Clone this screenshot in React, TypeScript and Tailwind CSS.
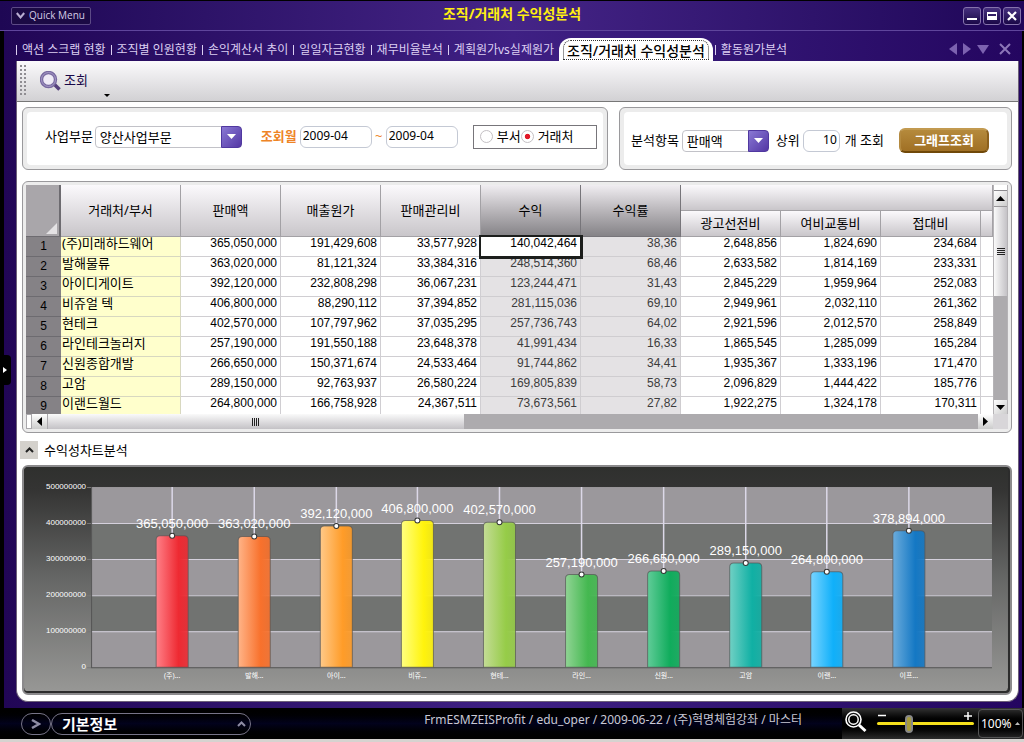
import { useState } from "react";

const tabs = [
  "액션 스크랩 현황",
  "조직별 인원현황",
  "손익계산서 추이",
  "일일자금현황",
  "재무비율분석",
  "계획원가vs실제원가",
];

const columns = ["판매액", "매출원가", "판매관리비", "수익", "수익률"];
const subColumns = ["광고선전비", "여비교통비", "접대비"];

const rows = [
  ["(주)미래하드웨어", "365,050,000", "191,429,608", "33,577,928", "140,042,464", "38,36", "2,648,856", "1,824,690", "234,684"],
  ["발해물류", "363,020,000", "81,121,324", "33,384,316", "248,514,360", "68,46", "2,633,582", "1,814,169", "233,331"],
  ["아이디게이트", "392,120,000", "232,808,298", "36,067,231", "123,244,471", "31,43", "2,845,229", "1,959,964", "252,083"],
  ["비쥬얼 텍", "406,800,000", "88,290,112", "37,394,852", "281,115,036", "69,10", "2,949,961", "2,032,110", "261,362"],
  ["현테크", "402,570,000", "107,797,962", "37,035,295", "257,736,743", "64,02", "2,921,596", "2,012,570", "258,849"],
  ["라인테크놀러지", "257,190,000", "191,550,188", "23,648,378", "41,991,434", "16,33", "1,865,545", "1,285,099", "165,284"],
  ["신원종합개발", "266,650,000", "150,371,674", "24,533,464", "91,744,862", "34,41", "1,935,367", "1,333,196", "171,470"],
  ["고암", "289,150,000", "92,763,937", "26,580,224", "169,805,839", "58,73", "2,096,829", "1,444,422", "185,776"],
  ["이랜드월드", "264,800,000", "166,758,928", "24,367,511", "73,673,561", "27,82", "1,922,275", "1,324,178", "170,311"],
];

const bars = [
  { label: "(주)...", value: 365050000, light: "#ff8088", color: "#ee2a32" },
  { label: "발해...", value: 363020000, light: "#ffb488", color: "#f8712c" },
  { label: "아이...", value: 392120000, light: "#ffc988", color: "#ff9c28" },
  { label: "비쥬...", value: 406800000, light: "#ffff80", color: "#fff30c" },
  { label: "현테...", value: 402570000, light: "#c4dc96", color: "#96cc48" },
  { label: "라인...", value: 257190000, light: "#90d494", color: "#44b850" },
  { label: "신원...", value: 266650000, light: "#60cc98", color: "#10ac5c" },
  { label: "고암", value: 289150000, light: "#70d0c4", color: "#10b0a4" },
  { label: "이랜...", value: 264800000, light: "#78d4ff", color: "#10b0fa" },
  { label: "이프...", value: 378894000, light: "#6cacdc", color: "#1478c4" },
];

const panel = "rounded-md border border-[#9a999c] bg-[#ececec]";
const headCell =
  "border-r border-b border-[#a3a1a5] bg-linear-to-b from-[#fbf9fc] to-[#c9c6ca] p-0 text-[13px] font-normal";
const darkHead =
  "border-r border-b border-[#77757a] bg-linear-to-b from-[#f0edf1] via-[#b9b6ba] to-[#858387] p-0 text-[13px] font-normal";
const numberFont = "font-['Liberation_Sans',sans-serif]";

function SelectBox({ id, value, className }: { id: string; value: string; className: string }) {
  return (
    <div className={`relative h-[22px] ${className}`}>
      <select
        id={id}
        defaultValue={value}
        className="h-full w-full appearance-none rounded-sm border border-[#c2c2c8] bg-white pl-1 text-[13px] leading-5 text-black"
      >
        <option>{value}</option>
      </select>
      <span className="pointer-events-none absolute inset-y-0 right-0 flex w-[21px] items-center justify-center rounded-r-sm border border-[#5038a0] bg-linear-to-br from-[#8a78d4] to-[#5436a4]">
        <svg width="9" height="5" viewBox="0 0 9 5">
          <path d="M0 0h9L4.500 5z" fill="#fff" />
        </svg>
      </span>
    </div>
  );
}

function TitleBar() {
  const button =
    "flex size-[18px] items-center justify-center rounded-[3px] border border-[#8573ac] bg-linear-to-b from-[#46307e] to-[#1b0848]";
  return (
    <header className="grid h-[31px] grid-cols-[1fr_auto_1fr] items-center border-t border-b border-t-black border-b-[#5f459c] bg-linear-to-r from-[#1e0754] via-[#452487] to-[#1f0658] px-[3px]">
      <button className="ml-2 flex h-[18px] w-20 items-center gap-1 rounded-xs border border-[#5c4a86] bg-[#1b0a44] pl-1 font-['Open_Sans',sans-serif] text-[10px] text-[#d4cce6]">
        <svg width="9" height="7" viewBox="0 0 9 7" fill="none" stroke="#b9aed2" strokeWidth="2">
          <path d="M.8 1l3.700 4.500L8.200 1" />
        </svg>
        Quick Menu
      </button>
      <h1 className="pb-1 text-[14px] leading-5 font-bold text-[#ffee10]">조직/거래처 수익성분석</h1>
      <div className="flex justify-end gap-0.5">
        <button aria-label="최소화" className={button}>
          <svg width="10" height="10" viewBox="0 0 10 10"><path d="M0 7h10v2H0z" fill="#fff" /></svg>
        </button>
        <button aria-label="최대화" className={button}>
          <svg width="10" height="8" viewBox="0 0 10 8"><path d="M0 0h10v8H0zM1 2v2h8V2z" fill="#fff" fillRule="evenodd" /></svg>
        </button>
        <button aria-label="닫기" className={button}>
          <svg width="10" height="10" viewBox="0 0 10 10" stroke="#fff" strokeWidth="2.200"><path d="M1 1l8 8M9 1L1 9" /></svg>
        </button>
      </div>
    </header>
  );
}

function TabBar() {
  return (
    <nav className="flex h-[30px] items-end justify-between pr-2 text-[12px] text-[#dccff2]">
      <div className="flex items-end">
        <ul className="flex pb-[3px] leading-4">
          {tabs.map((tab) => (
            <li key={tab} className="flex items-center whitespace-nowrap">
              <span className="mr-[5px] h-2.5 w-px bg-[#dccff2]" />
              <a href="#" className="mr-[5px]">{tab}</a>
            </li>
          ))}
        </ul>
        <a
          href="#"
          aria-current="page"
          className="flex h-[23px] rounded-t-xl bg-white px-1 pt-0.5 text-[14px] leading-5 font-medium whitespace-nowrap text-black"
        >
          <span className="h-5 rounded-t-lg border border-dotted border-[#333] px-[3px]">조직/거래처 수익성분석</span>
        </a>
        <div className="flex items-center pb-[3px] pl-0.5 leading-4">
          <span className="mr-[5px] h-2.5 w-px bg-[#dccff2]" />
          <a href="#">활동원가분석</a>
        </div>
      </div>
      <div className="flex gap-1.5 pb-1.5">
        <button aria-label="이전 탭"><svg width="8" height="12" viewBox="0 0 8 12"><path d="M8 0v12L0 6z" fill="#7c62b0" /></svg></button>
        <button aria-label="다음 탭"><svg width="8" height="12" viewBox="0 0 8 12"><path d="M0 0v12l8-6z" fill="#7c62b0" /></svg></button>
        <button aria-label="탭 목록"><svg width="12" height="12" viewBox="0 0 12 12"><path d="M0 2h12L6 11z" fill="#7c62b0" /></svg></button>
        <button aria-label="탭 닫기" className="ml-1"><svg width="12" height="12" viewBox="0 0 12 12" stroke="#8c76b8" strokeWidth="2"><path d="M1 1l10 10M11 1L1 11" /></svg></button>
      </div>
    </nav>
  );
}

function Toolbar() {
  return (
    <div className="flex h-[41px] items-center border-b border-[#777] bg-linear-to-b from-[#fbfafc] to-[#d2d1d4] pl-[3px]">
      <svg width="6" height="32" viewBox="0 0 6 32" fill="#8f8d92">
        {[0, 4, 8, 12, 16, 20, 24, 28].map((y) => (
          <path key={y} d={`M0 ${y}h2v2H0zM4 ${y}h2v2H4z`} />
        ))}
      </svg>
      <button className="ml-3.5 flex items-center gap-[3px] text-[13px] text-[#180848]">
        <svg width="21" height="20" viewBox="0 0 21 20" fill="none">
          <path d="M14 13l5.500 5.500" stroke="#55407c" strokeWidth="3.500" />
          <circle cx="8.500" cy="8.500" r="7" fill="#eeeaf6" stroke="#7869a0" strokeWidth="3.400" />
          <circle cx="8.500" cy="8.500" r="7" stroke="#a79bc8" />
        </svg>
        조회
      </button>
      <button aria-label="도구 메뉴" className="mt-7 ml-4">
        <svg width="6" height="3" viewBox="0 0 6 3"><path d="M0 0h6L3 3z" /></svg>
      </button>
    </div>
  );
}

function Filters() {
  const [target, setTarget] = useState("거래처");
  const input = "h-[22px] rounded-md border border-[#c4c9d4] bg-white pb-0.5 pl-0.5 text-[12px] leading-4";
  const box = "flex h-[53px] rounded-sm bg-white text-[13px]";

  return (
    <form className="grid grid-cols-[586fr_393fr] gap-[11px]" onSubmit={(e) => e.preventDefault()}>
      <div className={`${panel} p-1`}>
        <div className={`${box} items-center pb-1 pl-[18px]`}>
          <label htmlFor="division">사업부문</label>
          <SelectBox id="division" value="양산사업부문" className="ml-0.5 w-[147px]" />
          <label htmlFor="from" className="ml-[19px] font-bold text-[#ee8426]">조회월</label>
          <input id="from" defaultValue="2009-04" className={`ml-[3px] w-[72px] ${input}`} />
          <span className="w-3.5 text-center text-[#ee8426]">~</span>
          <input aria-label="종료월" defaultValue="2009-04" className={`w-[72px] ${input}`} />
          <fieldset aria-label="조회 대상" className="ml-[15px] flex h-6 w-[124px] items-center border border-[#77757a] pl-1.5">
            {["부서", "거래처"].map((name) => (
              <label key={name} className="flex items-center gap-1">
                <input
                  type="radio"
                  name="target"
                  checked={target === name}
                  onChange={() => setTarget(name)}
                  className="size-[13px] appearance-none rounded-full border border-[#c4c0c4] bg-white checked:bg-radial checked:from-[#e01828] checked:from-30% checked:to-white checked:to-40%"
                />
                {name}
              </label>
            ))}
          </fieldset>
        </div>
      </div>
      <div className={`${panel} p-1`}>
        <div className={`${box} items-center pt-1 pl-[7px]`}>
          <label htmlFor="item">분석항목</label>
          <SelectBox id="item" value="판매액" className="ml-[3px] w-[87px]" />
          <label htmlFor="top" className="ml-[7px]">상위</label>
          <input id="top" defaultValue="10" className={`ml-[3px] w-[37px] pr-0.5 text-right ${input}`} />
          <span className="ml-[5px]">개 조회</span>
          <button className="ml-[15px] h-[25px] w-[90px] rounded-md border-2 border-t-[#c29a50] border-r-[#8c601c] border-b-[#704808] border-l-[#b48a40] bg-linear-to-b from-[#b58a3c] to-[#a07024] pb-0.5 leading-4 font-bold text-white">
            그래프조회
          </button>
        </div>
      </div>
    </form>
  );
}

function Grid() {
  return (
    <div className={`${panel} grid grid-cols-[1fr_15px] p-[3px]`}>
      <div className="h-[229px] overflow-hidden bg-white">
        <table className="w-full table-fixed border-separate border-spacing-0">
          <colgroup>
            <col className="w-[35px]" />
            <col className="w-[120px]" />
            {[...columns, ...subColumns].map((c) => (
              <col key={c} className="w-[100px]" />
            ))}
            <col />
          </colgroup>
          <thead>
            <tr className="h-[26px]">
              <th rowSpan={2} className="border-r-2 border-b border-[#6d6b70] bg-[#a9a6aa] p-0 pr-0.5 pb-0.5 align-bottom">
                <svg className="ml-auto" width="11" height="11" viewBox="0 0 11 11"><path d="M11 0v11H0z" fill="#e4e2e4" /></svg>
              </th>
              <th rowSpan={2} className={headCell}>거래처/부서</th>
              {columns.map((c) => (
                <th key={c} rowSpan={2} className={c.startsWith("수익") ? darkHead : headCell}>{c}</th>
              ))}
              <th colSpan={4} className={headCell} />
            </tr>
            <tr className="h-[26px]">
              {subColumns.map((c) => (
                <th key={c} className={headCell}>{c}</th>
              ))}
              <th className={headCell} />
            </tr>
          </thead>
          <tbody>
            {rows.map((row, r) => (
              <tr key={row[0]} className="h-5">
                <th className={`border-b border-[#6d6b70] bg-[#858286] p-0 text-[12px] leading-[19px] font-normal ${numberFont}`}>{r + 1}</th>
                <td className="border-r border-b border-[#d8d8c0] bg-[#ffffcc] p-0 pl-px align-top text-[13px] leading-[13px] whitespace-nowrap">{row[0]}</td>
                {row.slice(1).map((cell, c) => {
                  const active = r === 0 && c === 3;
                  const shaded = c === 3 || c === 4;
                  return (
                    <td
                      key={c}
                      className={`border-r border-b p-0 pr-[3px] text-right align-top text-[12px] leading-[13px] ${numberFont} ${
                        active
                          ? "relative border-[#1c1e1c] bg-white outline-2 outline-[#1c1e1c]"
                          : shaded
                            ? "border-[#cfcdd0] bg-[#e4e2e4] text-[#3c3c3c]"
                            : "border-[#d0ced2]"
                      }`}
                    >
                      {cell}
                    </td>
                  );
                })}
                <td className="border-b border-[#d0ced2] p-0" />
              </tr>
            ))}
          </tbody>
        </table>
      </div>

      {/* vertical scroll bar */}
      <div className="flex h-[229px] flex-col border-x border-[#b5b3b6] bg-[#adabae]">
        <div className="h-1.5 border-b border-[#8c8a8e] bg-white" />
        <button aria-label="위로" className="flex h-4 items-center justify-center border-b border-[#99979a] bg-linear-to-br from-white to-[#ccc]">
          <svg width="9" height="5" viewBox="0 0 9 5"><path d="M0 5h9L4.500 0z" /></svg>
        </button>
        <div className="flex h-[89px] items-center justify-center bg-linear-to-r from-[#fafafa] to-[#c4c2c6]">
          <svg width="8" height="8" viewBox="0 0 8 8"><path d="M0 .5h8M0 2.500h8M0 4.500h8M0 6.500h8" stroke="#222" /></svg>
        </div>
        <button aria-label="아래로" className="mt-auto flex h-3.5 items-center justify-center bg-linear-to-br from-white to-[#ccc]">
          <svg width="9" height="5" viewBox="0 0 9 5"><path d="M0 0h9L4.500 5z" /></svg>
        </button>
      </div>

      {/* horizontal scroll bar */}
      <div className="flex h-[15px] bg-[#adabae]">
        <div className="w-1.5 border border-[#aaa8ac] bg-white" />
        <button aria-label="왼쪽으로" className="flex w-4 items-center justify-center border-r border-[#aaa8ac] bg-linear-to-b from-white to-[#ccc]">
          <svg width="5" height="9" viewBox="0 0 5 9"><path d="M5 0v9L0 4.500z" /></svg>
        </button>
        <div className="flex w-[43%] items-center justify-center bg-linear-to-b from-[#fafafa] to-[#c4c2c6]">
          <svg width="8" height="8" viewBox="0 0 8 8"><path d="M.5 0v8M2.500 0v8M4.500 0v8M6.500 0v8" stroke="#222" /></svg>
        </div>
        <button aria-label="오른쪽으로" className="ml-auto flex w-[15px] items-center justify-center bg-linear-to-b from-white to-[#ccc]">
          <svg width="5" height="9" viewBox="0 0 5 9"><path d="M0 0v9l5-4.500z" /></svg>
        </button>
      </div>
      <div className="bg-[#d8d6d9]" />
    </div>
  );
}

const BASE = 200; // y of the zero line
const yOf = (value: number) => BASE - (value / 500000000) * 180;

function Chart() {
  return (
    <div className="overflow-hidden rounded-md border-2 border-[#8b8a8c] bg-[#2c2c2c] pr-0.5 pb-0.5">
      <svg viewBox="0 0 983 224" className="block h-auto w-full">
        <defs>
          <linearGradient id="back" x1="0" y1="0" x2="0" y2="1">
            <stop offset="0" stopColor="#2f302e" />
            <stop offset=".1" stopColor="#343433" />
            <stop offset=".5" stopColor="#666766" />
            <stop offset="1" stopColor="#979795" />
          </linearGradient>
          {bars.map((bar, i) => (
            <linearGradient key={bar.label} id={`bar${i}`}>
              <stop offset="0" stopColor={bar.light} />
              <stop offset=".7" stopColor={bar.color} />
              <stop offset="1" stopColor={bar.color} stopOpacity=".88" />
            </linearGradient>
          ))}
        </defs>
        <rect width="983" height="224" rx="4" fill="url(#back)" />
        {[0, 1, 2, 3, 4].map((i) => (
          <rect key={i} x="67" y={20 + i * 36} width="900" height="36" fill={i % 2 ? "#717371" : "#9b989c"} />
        ))}
        {[0, 1, 2, 3, 4, 5].map((i) => (
          <g key={i}>
            {i < 5 && i > 0 && <path d={`M67 ${20.5 + i * 36}h900`} stroke="#d4d0dc" />}
            <path d={`M63 ${20.5 + i * 36}h4`} stroke="#777" />
            <text x="62" y={22 + i * 36} textAnchor="end" fontSize="8" fill="#fff" className="font-['Liberation_Sans',sans-serif]">
              {(5 - i) * 100000000}
            </text>
          </g>
        ))}
        <path d={`M67.500 20V${BASE}.5H967`} fill="none" stroke="#555" />
        {bars.map((bar, i) => {
          const x = Math.round(148 + i * 81.8);
          const y = yOf(bar.value);
          return (
            <g key={bar.label}>
              <path d={`M${x} 20V${y}`} stroke="#dcd8e8" strokeWidth="1.500" />
              <path
                d={`M${x - 16} ${BASE}V${y + 4}q0-4 4-4h24q4 0 4 4V${BASE}z`}
                fill={`url(#bar${i})`}
                stroke="#555"
                strokeOpacity=".7"
              />
              <circle cx={x} cy={y} r="2.500" fill="#fff" stroke="#333" />
              <text x={x} y={y - 8} textAnchor="middle" fontSize="13" fill="#fff" className="font-['Liberation_Sans',sans-serif]">
                {bar.value.toLocaleString("en-US")}
              </text>
              <text x={x} y="211" textAnchor="middle" fontSize="7" fill="#fff">{bar.label}</text>
            </g>
          );
        })}
      </svg>
    </div>
  );
}

function StatusBar() {
  return (
    <footer className="flex h-[31px] items-stretch bg-linear-to-b from-black via-[#02021c] to-black">
      <div className="flex flex-1 items-center pl-[21px]">
        <button aria-label="열기" className="flex h-[22px] w-[30px] items-center justify-center rounded-full border border-[#777488]">
          <svg width="10" height="10" viewBox="0 0 10 10" fill="none" stroke="#8e8ca4" strokeWidth="2.500"><path d="M1 1l7 4-7 4" /></svg>
        </button>
        <button className="flex h-[22px] w-[200px] items-center justify-between rounded-full border border-[#777488] pr-1 pl-2.5 text-[15px] leading-5 font-bold text-white">
          기본정보
          <svg width="9" height="6" viewBox="0 0 9 6" fill="none" stroke="#8e8ca4" strokeWidth="2"><path d="M1 5l3.500-3.500L8 5" /></svg>
        </button>
        <p className="mr-10 ml-auto pb-2 text-[12px] leading-4 whitespace-nowrap text-[#c8c8d4]">
          FrmESMZEISProfit / edu_oper / 2009-06-22 / (주)혁명체험강좌 / 마스터
        </p>
      </div>
      <div className="flex items-center bg-linear-to-b from-[#343434] via-black to-[#2c2c2c] pr-px pl-[3px]">
        <svg width="22" height="22" viewBox="0 0 22 22" fill="none" stroke="#fff" className="mb-1">
          <circle cx="8.500" cy="8.500" r="7.500" strokeWidth="1.600" />
          <circle cx="8.500" cy="8.500" r="4.700" strokeWidth="1.500" />
          <path d="M14 14l6.500 6" strokeWidth="3" />
        </svg>
        <label className="relative ml-2.5 flex h-full w-[97px] items-center">
          <input
            type="range"
            aria-label="배율"
            defaultValue="31"
            className="h-[3px] w-full appearance-none rounded-full bg-[#f4e01c] [&::-webkit-slider-thumb]:h-[18px] [&::-webkit-slider-thumb]:w-2 [&::-webkit-slider-thumb]:appearance-none [&::-webkit-slider-thumb]:rounded-full [&::-webkit-slider-thumb]:border-2 [&::-webkit-slider-thumb]:border-[#888] [&::-webkit-slider-thumb]:bg-[#a89c3c]"
          />
          <svg className="absolute top-1 left-0 w-full" height="8" viewBox="0 0 97 8" stroke="#fff" strokeWidth="1.500"><path d="M1 3.500h8M87 4h8M91 0v8" /></svg>
        </label>
        <button className="ml-1 flex h-[29px] w-[45px] items-center justify-between rounded-sm border border-[#555] px-0.5 text-[12px] text-white">
          <span className="-mr-1">100%</span>
          <svg width="5" height="3" viewBox="0 0 5 3" className="shrink-0"><path d="M0 3h5L2.500 0z" fill="#bbb" /></svg>
        </button>
      </div>
    </footer>
  );
}

export default function App() {
  return (
    <div className="min-h-screen bg-[#d6d3d0] font-['Noto_Sans','Noto_Sans_CJK_KR',sans-serif] text-black">
      <TitleBar />
      <div className="relative border-r-2 border-l-4 border-r-black border-l-black bg-linear-to-r from-[#210656] via-[#3f2084] to-[#240660] pr-[3px] pb-1.5 pl-3">
        <TabBar />
        <main className="overflow-hidden rounded-b-xl border-x border-b border-[#6c6078] bg-white pb-1.5">
          <Toolbar />
          <div className="pt-[5px] pr-1.5 pl-[5px]">
            <Filters />
            <div className="mt-[11px]">
              <Grid />
            </div>
            <section>
              <div className="-ml-0.5 flex items-center gap-1.5 pt-2 pb-1.5 text-[13px] leading-4">
                <button aria-label="차트 접기" className="flex size-[18px] items-center justify-center bg-[#d4d1cc]">
                  <svg width="9" height="6" viewBox="0 0 9 6" fill="none" stroke="#222" strokeWidth="2"><path d="M1 5l3.500-3.500L8 5" /></svg>
                </button>
                <h2>수익성차트분석</h2>
              </div>
              <Chart />
            </section>
          </div>
        </main>
        {/* handle of the collapsed side menu */}
        <button aria-label="메뉴 펼치기" className="absolute top-[324px] -left-px flex h-[30px] w-2 items-center rounded-r-sm bg-black">
          <svg width="4" height="6" viewBox="0 0 4 6"><path d="M0 0v6l4-3z" fill="#fff" /></svg>
        </button>
      </div>
      <StatusBar />
    </div>
  );
}
